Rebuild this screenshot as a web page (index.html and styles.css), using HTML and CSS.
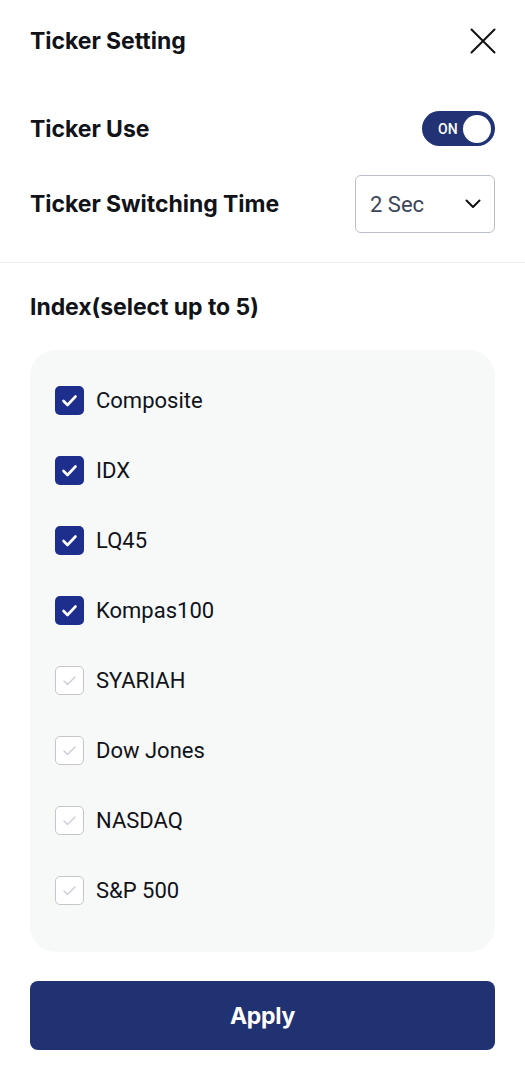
FILE: index.html
```html
<!DOCTYPE html>
<html>
<head>
<meta charset="utf-8">
<link rel="stylesheet" href="styles.css">
</head>
<body>
<div class="sheet">
  <header class="head">
    <h1 class="title">Ticker Setting</h1>
    <svg class="close" width="26" height="26" viewBox="0 0 26 26"><path d="M1.5 1.5L24.5 24.5M24.5 1.5L1.5 24.5" stroke="#111" stroke-width="2" stroke-linecap="round"/></svg>
  </header>
  <div class="row row-use">
    <span class="label">Ticker Use</span>
    <div class="toggle"><span class="toggle-text">ON</span><span class="knob"></span></div>
  </div>
  <div class="row row-time">
    <span class="label">Ticker Switching Time</span>
    <div class="select"><span class="select-val">2 Sec</span>
      <svg width="16" height="10" viewBox="0 0 16 10"><path d="M1.5 1.5L8 8L14.5 1.5" fill="none" stroke="#111" stroke-width="2" stroke-linecap="round" stroke-linejoin="round"/></svg>
    </div>
  </div>
  <div class="divider"></div>
  <h2 class="section">Index(select up to 5)</h2>
  <div class="card">
    <label class="item"><span class="cb on"><svg viewBox="0 0 29 29"><path d="M8.5 15L12.5 19L20.5 10.5" fill="none" stroke="#fff" stroke-width="2.6" stroke-linecap="round" stroke-linejoin="round"/></svg></span><span class="name">Composite</span></label>
    <label class="item"><span class="cb on"><svg viewBox="0 0 29 29"><path d="M8.5 15L12.5 19L20.5 10.5" fill="none" stroke="#fff" stroke-width="2.6" stroke-linecap="round" stroke-linejoin="round"/></svg></span><span class="name">IDX</span></label>
    <label class="item"><span class="cb on"><svg viewBox="0 0 29 29"><path d="M8.5 15L12.5 19L20.5 10.5" fill="none" stroke="#fff" stroke-width="2.6" stroke-linecap="round" stroke-linejoin="round"/></svg></span><span class="name">LQ45</span></label>
    <label class="item"><span class="cb on"><svg viewBox="0 0 29 29"><path d="M8.5 15L12.5 19L20.5 10.5" fill="none" stroke="#fff" stroke-width="2.6" stroke-linecap="round" stroke-linejoin="round"/></svg></span><span class="name">Kompas100</span></label>
    <label class="item"><span class="cb off"><svg viewBox="0 0 29 29"><path d="M9 15L12.5 18.5L20 11" fill="none" stroke="#c9ccd2" stroke-width="1.3" stroke-linecap="round" stroke-linejoin="round"/></svg></span><span class="name">SYARIAH</span></label>
    <label class="item"><span class="cb off"><svg viewBox="0 0 29 29"><path d="M9 15L12.5 18.5L20 11" fill="none" stroke="#c9ccd2" stroke-width="1.3" stroke-linecap="round" stroke-linejoin="round"/></svg></span><span class="name">Dow Jones</span></label>
    <label class="item"><span class="cb off"><svg viewBox="0 0 29 29"><path d="M9 15L12.5 18.5L20 11" fill="none" stroke="#c9ccd2" stroke-width="1.3" stroke-linecap="round" stroke-linejoin="round"/></svg></span><span class="name">NASDAQ</span></label>
    <label class="item"><span class="cb off"><svg viewBox="0 0 29 29"><path d="M9 15L12.5 18.5L20 11" fill="none" stroke="#c9ccd2" stroke-width="1.3" stroke-linecap="round" stroke-linejoin="round"/></svg></span><span class="name">S&amp;P 500</span></label>
  </div>
  <button class="apply">Apply</button>
</div>
</body>
</html>
```
FILE: styles.css
```css
* { box-sizing: border-box; }
html, body { margin: 0; padding: 0; background: #fff; }
body { font-family: Roboto, "Noto Sans", Arial, sans-serif; color: #111318; }
.sheet { width: 525px; height: 1080px; display: flex; flex-direction: column; }
.head { display: flex; align-items: center; justify-content: space-between; padding: 27px 29px 0 30px; height: 55px; }
.title { margin: 0; font-family: Inter, Roboto, sans-serif; font-size: 23px; font-weight: 700; letter-spacing: -0.05px; }
.close { display: block; }
.row { display: flex; align-items: center; justify-content: space-between; padding: 0 30px; }
.row-use { margin-top: 56px; height: 35px; }
.row-time { margin-top: 29px; height: 58px; }
.label { font-family: Inter, Roboto, sans-serif; font-size: 23px; font-weight: 700; letter-spacing: -0.05px; }
.toggle { width: 73px; height: 35px; border-radius: 18px; background: #213374; display: flex; align-items: center; justify-content: space-between; padding: 0 4px 0 16px; }
.toggle-text { color: #fff; font-size: 14px; font-weight: 500; }
.knob { width: 28px; height: 28px; border-radius: 50%; background: #fff; }
.select { width: 140px; height: 58px; border: 1px solid #b9bdc5; border-radius: 6px; display: flex; align-items: center; justify-content: space-between; padding: 0 13px 0 14px; }
.select-val { font-size: 22px; color: #3c4559; }
.divider { height: 1px; background: #ececee; margin-top: 29px; }
.section { margin: 29px 30px 0; font-family: Inter, Roboto, sans-serif; font-size: 23px; font-weight: 700; line-height: 30px; letter-spacing: -0.05px; }
.card { margin: 28px 30px 0; background: #f7f8f8; border-radius: 26px; padding: 36px 25px 47px; display: flex; flex-direction: column; gap: 41px; }
.item { display: flex; align-items: center; gap: 12px; height: 29px; }
.cb { width: 29px; height: 29px; border-radius: 5px; display: block; }
.cb svg { width: 29px; height: 29px; display: block; }
.cb.on { background: #1d2e8c; }
.cb.off { border: 1.5px solid #c4c6cc; background: #fff; }
.cb.off svg { margin: -1.5px; }
.name { font-size: 22px; color: #111318; }
.apply { margin: 29px 30px 0; height: 69px; border: none; border-radius: 8px; background: #203272; color: #fff; font-family: Inter, Roboto, sans-serif; font-size: 23px; font-weight: 700; letter-spacing: -0.3px; }
```
